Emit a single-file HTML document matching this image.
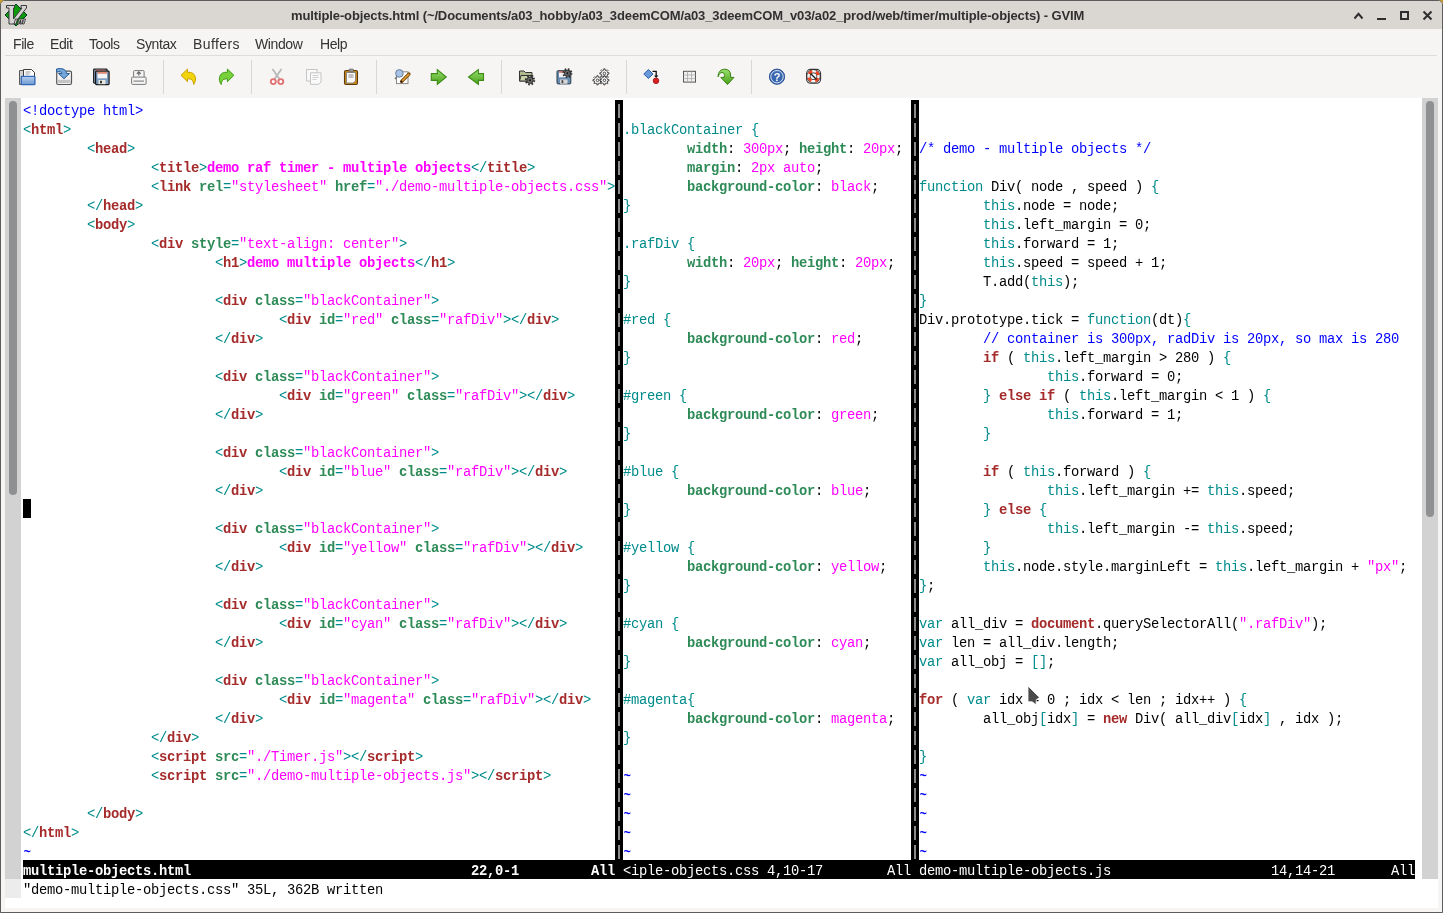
<!DOCTYPE html>
<html><head><meta charset="utf-8">
<style>
html,body{margin:0;padding:0;width:1443px;height:913px;overflow:hidden;background:#c99a2e;}
*{box-sizing:border-box;}
#win{position:absolute;left:0;top:0;width:1443px;height:913px;background:#f6f5f4;border:1px solid #5c5c5c;border-radius:5px 5px 0 0;overflow:hidden;}
#title{position:absolute;left:0;top:0;width:1441px;height:28px;background:#dad6d2;}
#title .t{position:absolute;left:290px;top:7px;font:bold 13px "Liberation Sans",sans-serif;letter-spacing:-0.12px;color:#303030;white-space:pre;}
#menu{position:absolute;left:0;top:28px;width:1441px;height:28px;font:14px "Liberation Sans",sans-serif;letter-spacing:-0.4px;color:#333;}
#menu span{position:absolute;top:7px;}
#menuline{position:absolute;left:4px;top:54px;width:1432px;height:1px;background:#dfdcd9;}
#text{position:absolute;left:5px;top:98px;width:1433px;height:810px;background:#fff;}
.pane{position:absolute;top:102px;font:13.8px "Liberation Mono",monospace;letter-spacing:-0.28px;line-height:19px;white-space:pre;color:#000;}
.p1{left:23px;width:592px;}
.p2{left:623px;width:288px;}
.p3{left:919px;width:496px;}
.l{height:19px;}
i{font-style:normal;}
.pane,.st,#cmd,#title,#menu{will-change:transform;}
.t{color:#008b8b;}
.b{color:#a52a2a;font-weight:bold;}
.g{color:#2e8b57;font-weight:bold;}
.m{color:#ff00ff;}
.M{color:#ff00ff;font-weight:bold;}
.u{color:#0000ff;}
.n{color:#0000ff;font-weight:bold;font-size:12.5px;position:relative;left:0.5px;top:0px;}
.sep{position:absolute;top:100px;width:8px;height:760px;background:#000;}
.sep::after{content:"";position:absolute;left:3px;top:0;width:2px;height:760px;
 background:repeating-linear-gradient(to bottom,#8c8c8c 0,#8c8c8c 14px,transparent 14px,transparent 19px);background-position:0 4px;}
.st{position:absolute;top:860px;height:19px;padding-top:2px;background:#000;color:#fff;font:13.8px "Liberation Mono",monospace;letter-spacing:-0.28px;line-height:19px;white-space:pre;}
.s1{left:23px;width:592px;font-weight:bold;}
.s2{left:615px;width:296px;padding-left:8px;}
.s3{left:911px;width:504px;padding-left:8px;}
#cmd{position:absolute;left:23px;top:881px;font:13.8px "Liberation Mono",monospace;letter-spacing:-0.28px;line-height:19px;white-space:pre;color:#000;}
.trough{position:absolute;top:98px;width:16px;height:781px;background:#d2d2d2;}
.thumb{position:absolute;width:8px;background:#8f9092;border-radius:4px;}
#cursor{position:absolute;left:23px;top:499px;width:8px;height:19px;background:#000;}
.tsep{position:absolute;top:60px;width:1px;height:34px;background:#dcdad7;}
</style></head><body>
<div id="win">
 <div id="title"><div class="t">multiple-objects.html (~/Documents/a03_hobby/a03_3deemCOM/a03_3deemCOM_v03/a02_prod/web/timer/multiple-objects) - GVIM</div></div>
 <div id="menu"><span style="left:12px">File</span><span style="left:49px">Edit</span><span style="left:88px">Tools</span><span style="left:135px">Syntax</span><span style="left:192px;letter-spacing:0.4px">Buffers</span><span style="left:254px">Window</span><span style="left:319px">Help</span></div>
 <div id="menuline"></div>
 <svg id="ov" width="1443" height="913" viewBox="0 0 1443 913" style="position:absolute;left:-1px;top:-1px;">
<defs>
 <linearGradient id="grn" x1="0" y1="0" x2="0" y2="1"><stop offset="0" stop-color="#98e070"/><stop offset="1" stop-color="#48a018"/></linearGradient>
 <linearGradient id="blu" x1="0" y1="0" x2="0" y2="1"><stop offset="0" stop-color="#b8d0f0"/><stop offset="1" stop-color="#6c98d0"/></linearGradient>
</defs>
<!-- vim logo -->
<g>
 <path d="M16,4 L27,15 L16,26 L5,15 Z" fill="#0a9a0a" stroke="#063a2a" stroke-width="1"/>
 <path d="M6.5,5.5 H14.5 V8 H13.5 V19 L22,8 H21 V5.5 H26.5 V8 L14,24 H9 V8 H6.5 Z" fill="#d4d4d4" stroke="#3a3a3a" stroke-width="1"/>
 <path d="M15.5,19 h2 l-1.5,5 h-2 Z M19,19 h6.5 l-1.5,5 h-1.6 l1,-3.6 h-0.8 l-1,3.6 h-1.6 l1,-3.6 h-0.8 l-1,3.6 h-1.6 Z" fill="#e0e0e0" stroke="#222" stroke-width="0.8"/>
</g>
<!-- window buttons -->
<g stroke="#2e2e2e" stroke-width="2" fill="none">
 <path d="M1354.5,18.5 L1358.5,13.8 L1362.5,18.5"/>
 <path d="M1377,19 H1386"/>
 <rect x="1401" y="12" width="7" height="7"/>
 <path d="M1423.5,11.5 L1431.5,19.5 M1431.5,11.5 L1423.5,19.5"/>
</g>
<!-- toolbar separators -->
<g fill="#d9d6d3">
 <rect x="163" y="60" width="1" height="34"/><rect x="251" y="60" width="1" height="34"/>
 <rect x="376" y="60" width="1" height="34"/><rect x="501" y="60" width="1" height="34"/>
 <rect x="626" y="60" width="1" height="34"/><rect x="751" y="60" width="1" height="34"/>
</g>
<!-- 1 open -->
<g transform="translate(19,68)">
 <path d="M0.5,2.5 h4.5 v14 h-4.5 z" fill="#d0d0d0" stroke="#5a5a5a"/>
 <path d="M4.5,16.5 V1.5 H12.5 L15.5,4.5 V16.5 Z" fill="#fff" stroke="#3a3a3a"/>
 <rect x="6.5" y="3.5" width="5" height="1" fill="#9a9a9a"/>
 <rect x="6.5" y="5.5" width="4" height="1" fill="#9a9a9a"/>
 <rect x="2.3" y="8.3" width="13.6" height="8.4" rx="0.8" fill="url(#blu)" stroke="#2f69b8" stroke-width="1.3"/>
</g>
<!-- 2 import -->
<g transform="translate(56,68)">
 <rect x="0.7" y="3.2" width="14.8" height="13.3" rx="1.5" fill="#f0f0f0" stroke="#555" stroke-width="1.2"/>
 <rect x="2" y="11.8" width="12.5" height="3.2" fill="#c4c4c4"/>
 <path d="M0.5,1 C5,0 10,0.5 10.5,5.5 H13.5 L8,10.8 L2.5,5.5 H6 C6,3.8 4,3.5 0.5,4 Z" fill="#74a6d8" stroke="#2a5e98" stroke-width="1"/>
</g>
<!-- 3 save all -->
<g transform="translate(93,68)">
 <rect x="0.6" y="1.1" width="13.5" height="14" rx="0.8" fill="#7c9cc0" stroke="#222" stroke-width="1.2"/>
 <rect x="2.6" y="1.7" width="9.5" height="1.8" fill="#e88a70"/>
 <rect x="2.6" y="3.1" width="13.5" height="13.5" rx="0.8" fill="#7c9cc0" stroke="#1a1a1a" stroke-width="1.2"/>
 <rect x="4.5" y="3.8" width="9.5" height="2" fill="#e88a70"/>
 <rect x="4.5" y="5.8" width="9.5" height="4.5" fill="#f4f4f4"/>
 <rect x="5.5" y="12" width="7" height="4.2" fill="#e8e8e0"/>
 <rect x="7" y="12.8" width="2" height="2.5" fill="#333"/>
</g>
<!-- 4 print -->
<g transform="translate(131,68)" stroke="#7a7a7a" fill="#f4f4f4">
 <rect x="2.6" y="2.6" width="10.5" height="7" rx="0.8"/>
 <path d="M7.8,4 v3.5 M5.8,5.8 l2,-2 l2,2" fill="none" stroke="#666" stroke-width="1.2"/>
 <rect x="0.6" y="9.1" width="14.5" height="7.3" rx="1"/>
 <rect x="2.5" y="12.5" width="10.5" height="1.2" fill="#888" stroke="none"/>
</g>
<!-- 5 undo / 6 redo -->
<path id="undo" d="M181,75.3 L187.5,69.1 V72.3 H189 C193,72.3 195.5,75 195.5,79 C195.5,81 194.8,83 193.7,84.5 C193.5,82 192.5,78.8 189,78.8 H187.5 V81.7 Z" fill="#f2d40c" stroke="#c8a000" stroke-width="1"/>
<path transform="translate(414.9,0) scale(-1,1)" d="M181,75.3 L187.5,69.1 V72.3 H189 C193,72.3 195.5,75 195.5,79 C195.5,81 194.8,83 193.7,84.5 C193.5,82 192.5,78.8 189,78.8 H187.5 V81.7 Z" fill="#78d03a" stroke="#3c9a12" stroke-width="1"/>
<!-- 7 cut -->
<path d="M272.5,69 L279.5,79 M281.5,69 L274.5,79" stroke="#b8b8b8" stroke-width="1.8"/>
<circle cx="273.3" cy="81.6" r="2.5" fill="#fff" stroke="#e07272" stroke-width="1.9"/>
<circle cx="280.8" cy="81.6" r="2.5" fill="#fff" stroke="#e07272" stroke-width="1.9"/>
<!-- 8 copy -->
<g fill="#fafafa" stroke="#c4c4c4">
 <rect x="306.6" y="69.5" width="10.5" height="11.5"/>
 <path d="M310.5,72.8 H321 V82 L318.5,84.3 H310.5 Z"/>
 <path d="M312.5,75.5 h6 M312.5,77.5 h6 M312.5,79.5 h4" stroke="#cfcfcf"/>
</g>
<!-- 9 paste -->
<rect x="344.5" y="70.5" width="13" height="14" rx="1.5" fill="#c98a1a" stroke="#5c3a0c" stroke-width="1.1"/>
<path d="M346.5,72.5 H355.5 V81 L353,83 H346.5 Z" fill="#fafafa" stroke="#777" stroke-width="0.8"/>
<rect x="349" y="69" width="4.5" height="2.8" rx="0.8" fill="#999" stroke="#555" stroke-width="0.6"/>
<path d="M348.5,75 h5 M348.5,77 h5" stroke="#888"/>
<!-- 10 find replace -->
<rect x="396.5" y="71.8" width="11.5" height="11.8" fill="#fff" stroke="#888"/>
<path d="M397,76.5 l-2,2.5" stroke="#777" stroke-width="1.5"/>
<circle cx="399.4" cy="73.4" r="3.8" fill="#a8c2e6" stroke="#6b7f99" stroke-width="1"/>
<path d="M401.5,81.5 L409,74" stroke="#7a4a10" stroke-width="3.2" stroke-linecap="round"/>
<path d="M401.5,81.5 L409,74" stroke="#e8a030" stroke-width="1.6"/>
<circle cx="401.6" cy="81.5" r="0.9" fill="#111"/>
<!-- 11/12 arrows -->
<path d="M431.3,73.6 H437.3 V69.6 L446.3,77 L437.3,84.4 V80.4 H431.3 Z" fill="url(#grn)" stroke="#3d8a14" stroke-width="1.1"/>
<path d="M483.5,73.6 H478.4 V69.6 L468.5,77 L478.4,84.4 V80.4 H483.5 Z" fill="url(#grn)" stroke="#3d8a14" stroke-width="1.1"/>
<!-- 13 folder gear -->
<path d="M519.5,71 H524 L525.5,72.5 H532 V81 H519.5 Z" fill="#b0b890" stroke="#333" stroke-width="1"/>
<path d="M519.5,81 L521,75.5 H533 L531.5,81 Z" fill="#c8d0a8" stroke="#333" stroke-width="1"/>
<g id="gear1">
 <circle cx="530" cy="80.3" r="4.2" fill="none" stroke="#333" stroke-width="2" stroke-dasharray="1.65 1.65"/>
 <circle cx="530" cy="80.3" r="3.2" fill="#6a6a6a" stroke="#222" stroke-width="0.8"/>
 <circle cx="530" cy="80.3" r="1" fill="#111"/>
</g>
<!-- 14 floppy gear -->
<rect x="557" y="70.7" width="13.8" height="13.2" rx="1" fill="#6a8cb0" stroke="#2a3a4a" stroke-width="1"/>
<rect x="559" y="71.2" width="7" height="1.6" fill="#e07060"/>
<rect x="559" y="72.8" width="8" height="4.5" fill="#f0f0f0"/>
<rect x="560" y="79.5" width="7.5" height="4.2" fill="#d8d8d8"/>
<rect x="561.5" y="80.2" width="1.8" height="2.8" fill="#444"/>
<g>
 <circle cx="567.4" cy="73.2" r="4" fill="none" stroke="#333" stroke-width="2" stroke-dasharray="1.6 1.54"/>
 <circle cx="567.4" cy="73.2" r="3" fill="#6a6a6a" stroke="#222" stroke-width="0.8"/>
 <circle cx="567.4" cy="73.2" r="1" fill="#111"/>
</g>
<!-- 15 gears outline -->
<path d="M607.64,72.76 L608.96,72.77 L608.96,74.03 L607.64,74.04 L607.14,75.23 L608.07,76.18 L607.18,77.07 L606.23,76.14 L605.04,76.64 L605.03,77.96 L603.77,77.96 L603.76,76.64 L602.57,76.14 L601.62,77.07 L600.73,76.18 L601.66,75.23 L601.16,74.04 L599.84,74.03 L599.84,72.77 L601.16,72.76 L601.66,71.57 L600.73,70.62 L601.62,69.73 L602.57,70.66 L603.76,70.16 L603.77,68.84 L605.03,68.84 L605.04,70.16 L606.23,70.66 L607.18,69.73 L608.07,70.62 L607.14,71.57 Z" fill="#fff" stroke="#333" stroke-width="0.9"/>
<circle cx="604.4" cy="73.4" r="1.3" fill="#fff" stroke="#333" stroke-width="0.9"/>
<path d="M600.74,79.66 L602.06,79.67 L602.06,80.93 L600.74,80.94 L600.24,82.13 L601.17,83.08 L600.28,83.97 L599.33,83.04 L598.14,83.54 L598.13,84.86 L596.87,84.86 L596.86,83.54 L595.67,83.04 L594.72,83.97 L593.83,83.08 L594.76,82.13 L594.26,80.94 L592.94,80.93 L592.94,79.67 L594.26,79.66 L594.76,78.47 L593.83,77.52 L594.72,76.63 L595.67,77.56 L596.86,77.06 L596.87,75.74 L598.13,75.74 L598.14,77.06 L599.33,77.56 L600.28,76.63 L601.17,77.52 L600.24,78.47 Z" fill="#fff" stroke="#333" stroke-width="0.9"/>
<circle cx="597.5" cy="80.3" r="1.3" fill="#fff" stroke="#333" stroke-width="0.9"/>
<path d="M607.64,79.66 L608.96,79.67 L608.96,80.93 L607.64,80.94 L607.14,82.13 L608.07,83.08 L607.18,83.97 L606.23,83.04 L605.04,83.54 L605.03,84.86 L603.77,84.86 L603.76,83.54 L602.57,83.04 L601.62,83.97 L600.73,83.08 L601.66,82.13 L601.16,80.94 L599.84,80.93 L599.84,79.67 L601.16,79.66 L601.66,78.47 L600.73,77.52 L601.62,76.63 L602.57,77.56 L603.76,77.06 L603.77,75.74 L605.03,75.74 L605.04,77.06 L606.23,77.56 L607.18,76.63 L608.07,77.52 L607.14,78.47 Z" fill="#fff" stroke="#333" stroke-width="0.9"/>
<circle cx="604.4" cy="80.3" r="1.3" fill="#fff" stroke="#333" stroke-width="0.9"/>
<!-- 16 diamond -->
<path d="M648.4,69.5 L653,74 L648.4,78.5 L643.8,74 Z" fill="#6a98d8" stroke="#2c5ca6" stroke-width="1"/>
<path d="M652.5,71.3 H656.2 V76" stroke="#111" stroke-width="1.3" fill="none"/>
<path d="M654,75.5 L656.2,78 L658.4,75.5 Z" fill="#111"/>
<circle cx="656" cy="80.8" r="2.8" fill="#d82020" stroke="#a01010" stroke-width="0.8"/>
<!-- 17 grid -->
<rect x="683.5" y="71.3" width="12" height="10.8" fill="#f0f0f0" stroke="#555" stroke-width="1"/>
<path d="M687.5,71.5 v10.5 M691.5,71.5 v10.5 M683.5,75 h12 M683.5,78.6 h12" stroke="#aaa" stroke-width="0.8"/>
<!-- 18 green curved arrow -->
<path d="M718.1,76.8 C718,72 720.5,69.2 725,69.2 C728.5,69.2 730.6,71.5 730.6,75 V77.4 H734 L727.5,84.5 L720.8,77.4 H724.4 V75.5 C724.4,73.5 723.5,72.5 722,72.5 C720.3,72.5 719,74 718.1,76.8 Z" fill="url(#grn)" stroke="#3a8210" stroke-width="1" stroke-linejoin="round"/>
<!-- 19 help -->
<circle cx="777" cy="76.7" r="7.6" fill="#3a68b0" stroke="#2a4f90" stroke-width="1"/>
<circle cx="777" cy="76.7" r="6.2" fill="none" stroke="#fff" stroke-width="0.8"/>
<text x="777" y="81" font-family="Liberation Sans" font-weight="bold" font-size="11" fill="#fff" text-anchor="middle">?</text>
<!-- 20 lifebuoy -->
<rect x="806.6" y="69.4" width="14" height="13.8" rx="4" fill="none" stroke="#3a3a3a" stroke-width="1.1"/>
<circle cx="813.5" cy="76.2" r="5" fill="none" stroke="#2a2a2a" stroke-width="4"/>
<circle cx="813.5" cy="76.2" r="5" fill="none" stroke="#f4f4f4" stroke-width="2.6"/>
<circle cx="813.5" cy="76.2" r="5" fill="none" stroke="#ee4420" stroke-width="2.8" stroke-dasharray="3.93 3.93" stroke-dashoffset="-1.96"/>
<path d="M810.5,73.5 L816.5,79.5" stroke="#1a1a1a" stroke-width="1.3"/>
</svg>

</div>
<div id="text"></div>
<div class="trough" style="left:5px"></div>
<div class="thumb" style="left:9px;top:101px;height:394px"></div>
<div style="position:absolute;left:5px;top:879px;width:16px;height:19px;background:#ececec"></div>
<div class="trough" style="left:1422px"></div>
<div class="thumb" style="left:1426px;top:101px;height:416px"></div>
<div class="pane p1"><div class="l"><i class="u">&lt;!doctype html&gt;</i></div><div class="l"><i class="t">&lt;</i><i class="b">html</i><i class="t">&gt;</i></div><div class="l">        <i class="t">&lt;</i><i class="b">head</i><i class="t">&gt;</i></div><div class="l">                <i class="t">&lt;</i><i class="b">title</i><i class="t">&gt;</i><i class="M">demo raf timer - multiple objects</i><i class="t">&lt;/</i><i class="b">title</i><i class="t">&gt;</i></div><div class="l">                <i class="t">&lt;</i><i class="b">link</i> <i class="g">rel</i><i class="t">=</i><i class="m">&quot;stylesheet&quot;</i> <i class="g">href</i><i class="t">=</i><i class="m">&quot;./demo-multiple-objects.css&quot;</i><i class="t">&gt;</i></div><div class="l">        <i class="t">&lt;/</i><i class="b">head</i><i class="t">&gt;</i></div><div class="l">        <i class="t">&lt;</i><i class="b">body</i><i class="t">&gt;</i></div><div class="l">                <i class="t">&lt;</i><i class="b">div</i> <i class="g">style</i><i class="t">=</i><i class="m">&quot;text-align: center&quot;</i><i class="t">&gt;</i></div><div class="l">                        <i class="t">&lt;</i><i class="b">h1</i><i class="t">&gt;</i><i class="M">demo multiple objects</i><i class="t">&lt;/</i><i class="b">h1</i><i class="t">&gt;</i></div><div class="l">&#8203;</div><div class="l">                        <i class="t">&lt;</i><i class="b">div</i> <i class="g">class</i><i class="t">=</i><i class="m">&quot;blackContainer&quot;</i><i class="t">&gt;</i></div><div class="l">                                <i class="t">&lt;</i><i class="b">div</i> <i class="g">id</i><i class="t">=</i><i class="m">&quot;red&quot;</i> <i class="g">class</i><i class="t">=</i><i class="m">&quot;rafDiv&quot;</i><i class="t">&gt;</i><i class="t">&lt;/</i><i class="b">div</i><i class="t">&gt;</i></div><div class="l">                        <i class="t">&lt;/</i><i class="b">div</i><i class="t">&gt;</i></div><div class="l">&#8203;</div><div class="l">                        <i class="t">&lt;</i><i class="b">div</i> <i class="g">class</i><i class="t">=</i><i class="m">&quot;blackContainer&quot;</i><i class="t">&gt;</i></div><div class="l">                                <i class="t">&lt;</i><i class="b">div</i> <i class="g">id</i><i class="t">=</i><i class="m">&quot;green&quot;</i> <i class="g">class</i><i class="t">=</i><i class="m">&quot;rafDiv&quot;</i><i class="t">&gt;</i><i class="t">&lt;/</i><i class="b">div</i><i class="t">&gt;</i></div><div class="l">                        <i class="t">&lt;/</i><i class="b">div</i><i class="t">&gt;</i></div><div class="l">&#8203;</div><div class="l">                        <i class="t">&lt;</i><i class="b">div</i> <i class="g">class</i><i class="t">=</i><i class="m">&quot;blackContainer&quot;</i><i class="t">&gt;</i></div><div class="l">                                <i class="t">&lt;</i><i class="b">div</i> <i class="g">id</i><i class="t">=</i><i class="m">&quot;blue&quot;</i> <i class="g">class</i><i class="t">=</i><i class="m">&quot;rafDiv&quot;</i><i class="t">&gt;</i><i class="t">&lt;/</i><i class="b">div</i><i class="t">&gt;</i></div><div class="l">                        <i class="t">&lt;/</i><i class="b">div</i><i class="t">&gt;</i></div><div class="l">&#8203;</div><div class="l">                        <i class="t">&lt;</i><i class="b">div</i> <i class="g">class</i><i class="t">=</i><i class="m">&quot;blackContainer&quot;</i><i class="t">&gt;</i></div><div class="l">                                <i class="t">&lt;</i><i class="b">div</i> <i class="g">id</i><i class="t">=</i><i class="m">&quot;yellow&quot;</i> <i class="g">class</i><i class="t">=</i><i class="m">&quot;rafDiv&quot;</i><i class="t">&gt;</i><i class="t">&lt;/</i><i class="b">div</i><i class="t">&gt;</i></div><div class="l">                        <i class="t">&lt;/</i><i class="b">div</i><i class="t">&gt;</i></div><div class="l">&#8203;</div><div class="l">                        <i class="t">&lt;</i><i class="b">div</i> <i class="g">class</i><i class="t">=</i><i class="m">&quot;blackContainer&quot;</i><i class="t">&gt;</i></div><div class="l">                                <i class="t">&lt;</i><i class="b">div</i> <i class="g">id</i><i class="t">=</i><i class="m">&quot;cyan&quot;</i> <i class="g">class</i><i class="t">=</i><i class="m">&quot;rafDiv&quot;</i><i class="t">&gt;</i><i class="t">&lt;/</i><i class="b">div</i><i class="t">&gt;</i></div><div class="l">                        <i class="t">&lt;/</i><i class="b">div</i><i class="t">&gt;</i></div><div class="l">&#8203;</div><div class="l">                        <i class="t">&lt;</i><i class="b">div</i> <i class="g">class</i><i class="t">=</i><i class="m">&quot;blackContainer&quot;</i><i class="t">&gt;</i></div><div class="l">                                <i class="t">&lt;</i><i class="b">div</i> <i class="g">id</i><i class="t">=</i><i class="m">&quot;magenta&quot;</i> <i class="g">class</i><i class="t">=</i><i class="m">&quot;rafDiv&quot;</i><i class="t">&gt;</i><i class="t">&lt;/</i><i class="b">div</i><i class="t">&gt;</i></div><div class="l">                        <i class="t">&lt;/</i><i class="b">div</i><i class="t">&gt;</i></div><div class="l">                <i class="t">&lt;/</i><i class="b">div</i><i class="t">&gt;</i></div><div class="l">                <i class="t">&lt;</i><i class="b">script</i> <i class="g">src</i><i class="t">=</i><i class="m">&quot;./Timer.js&quot;</i><i class="t">&gt;</i><i class="t">&lt;/</i><i class="b">script</i><i class="t">&gt;</i></div><div class="l">                <i class="t">&lt;</i><i class="b">script</i> <i class="g">src</i><i class="t">=</i><i class="m">&quot;./demo-multiple-objects.js&quot;</i><i class="t">&gt;</i><i class="t">&lt;/</i><i class="b">script</i><i class="t">&gt;</i></div><div class="l">&#8203;</div><div class="l">        <i class="t">&lt;/</i><i class="b">body</i><i class="t">&gt;</i></div><div class="l"><i class="t">&lt;/</i><i class="b">html</i><i class="t">&gt;</i></div><div class="l"><i class="n">~</i></div></div><div class="pane p2"><div class="l">&#8203;</div><div class="l"><i class="t">.blackContainer {</i></div><div class="l">        <i class="g">width</i>: <i class="m">300px</i>; <i class="g">height</i>: <i class="m">20px</i>;</div><div class="l">        <i class="g">margin</i>: <i class="m">2px auto</i>;</div><div class="l">        <i class="g">background-color</i>: <i class="m">black</i>;</div><div class="l"><i class="t">}</i></div><div class="l">&#8203;</div><div class="l"><i class="t">.rafDiv {</i></div><div class="l">        <i class="g">width</i>: <i class="m">20px</i>; <i class="g">height</i>: <i class="m">20px</i>;</div><div class="l"><i class="t">}</i></div><div class="l">&#8203;</div><div class="l"><i class="t">#red {</i></div><div class="l">        <i class="g">background-color</i>: <i class="m">red</i>;</div><div class="l"><i class="t">}</i></div><div class="l">&#8203;</div><div class="l"><i class="t">#green {</i></div><div class="l">        <i class="g">background-color</i>: <i class="m">green</i>;</div><div class="l"><i class="t">}</i></div><div class="l">&#8203;</div><div class="l"><i class="t">#blue {</i></div><div class="l">        <i class="g">background-color</i>: <i class="m">blue</i>;</div><div class="l"><i class="t">}</i></div><div class="l">&#8203;</div><div class="l"><i class="t">#yellow {</i></div><div class="l">        <i class="g">background-color</i>: <i class="m">yellow</i>;</div><div class="l"><i class="t">}</i></div><div class="l">&#8203;</div><div class="l"><i class="t">#cyan {</i></div><div class="l">        <i class="g">background-color</i>: <i class="m">cyan</i>;</div><div class="l"><i class="t">}</i></div><div class="l">&#8203;</div><div class="l"><i class="t">#magenta{</i></div><div class="l">        <i class="g">background-color</i>: <i class="m">magenta</i>;</div><div class="l"><i class="t">}</i></div><div class="l">&#8203;</div><div class="l"><i class="n">~</i></div><div class="l"><i class="n">~</i></div><div class="l"><i class="n">~</i></div><div class="l"><i class="n">~</i></div><div class="l"><i class="n">~</i></div></div><div class="pane p3"><div class="l">&#8203;</div><div class="l">&#8203;</div><div class="l"><i class="u">/* demo - multiple objects */</i></div><div class="l">&#8203;</div><div class="l"><i class="t">function</i> Div( node , speed ) <i class="t">{</i></div><div class="l">        <i class="t">this</i>.node = node;</div><div class="l">        <i class="t">this</i>.left_margin = 0;</div><div class="l">        <i class="t">this</i>.forward = 1;</div><div class="l">        <i class="t">this</i>.speed = speed + 1;</div><div class="l">        T.add(<i class="t">this</i>);</div><div class="l"><i class="t">}</i></div><div class="l">Div.prototype.tick = <i class="t">function</i>(dt)<i class="t">{</i></div><div class="l">        <i class="u">// container is 300px, radDiv is 20px, so max is 280</i></div><div class="l">        <i class="b">if</i> ( <i class="t">this</i>.left_margin &gt; 280 ) <i class="t">{</i></div><div class="l">                <i class="t">this</i>.forward = 0;</div><div class="l">        <i class="t">}</i> <i class="b">else</i> <i class="b">if</i> ( <i class="t">this</i>.left_margin &lt; 1 ) <i class="t">{</i></div><div class="l">                <i class="t">this</i>.forward = 1;</div><div class="l">        <i class="t">}</i></div><div class="l">&#8203;</div><div class="l">        <i class="b">if</i> ( <i class="t">this</i>.forward ) <i class="t">{</i></div><div class="l">                <i class="t">this</i>.left_margin += <i class="t">this</i>.speed;</div><div class="l">        <i class="t">}</i> <i class="b">else</i> <i class="t">{</i></div><div class="l">                <i class="t">this</i>.left_margin -= <i class="t">this</i>.speed;</div><div class="l">        <i class="t">}</i></div><div class="l">        <i class="t">this</i>.node.style.marginLeft = <i class="t">this</i>.left_margin + <i class="m">&quot;px&quot;</i>;</div><div class="l"><i class="t">}</i>;</div><div class="l">&#8203;</div><div class="l"><i class="t">var</i> all_div = <i class="b">document</i>.querySelectorAll(<i class="m">&quot;.rafDiv&quot;</i>);</div><div class="l"><i class="t">var</i> len = all_div.length;</div><div class="l"><i class="t">var</i> all_obj = <i class="t">[]</i>;</div><div class="l">&#8203;</div><div class="l"><i class="b">for</i> ( <i class="t">var</i> idx = 0 ; idx &lt; len ; idx++ ) <i class="t">{</i></div><div class="l">        all_obj<i class="t">[</i>idx<i class="t">]</i> = <i class="b">new</i> Div( all_div<i class="t">[</i>idx<i class="t">]</i> , idx );</div><div class="l">&#8203;</div><div class="l"><i class="t">}</i></div><div class="l"><i class="n">~</i></div><div class="l"><i class="n">~</i></div><div class="l"><i class="n">~</i></div><div class="l"><i class="n">~</i></div><div class="l"><i class="n">~</i></div></div>
<div class="sep" style="left:615px"></div>
<div class="sep" style="left:911px"></div>
<div class="st s1">multiple-objects.html                                   22,0-1         All</div><div class="st s2">&lt;iple-objects.css 4,10-17        All</div><div class="st s3">demo-multiple-objects.js                    14,14-21       All</div>
<div id="cmd">"demo-multiple-objects.css" 35L, 362B written</div>
<div id="cursor"></div>
<svg width="1443" height="913" style="position:absolute;left:0;top:0;">
 <path d="M1028,686 L1039.5,697.5 L1036.3,699.8 L1036,704.8 L1032.2,701.8 L1028,701.8 Z" fill="#4a4a4a" stroke="#fff" stroke-width="0.8" stroke-linejoin="round"/>
</svg>
</body></html>
